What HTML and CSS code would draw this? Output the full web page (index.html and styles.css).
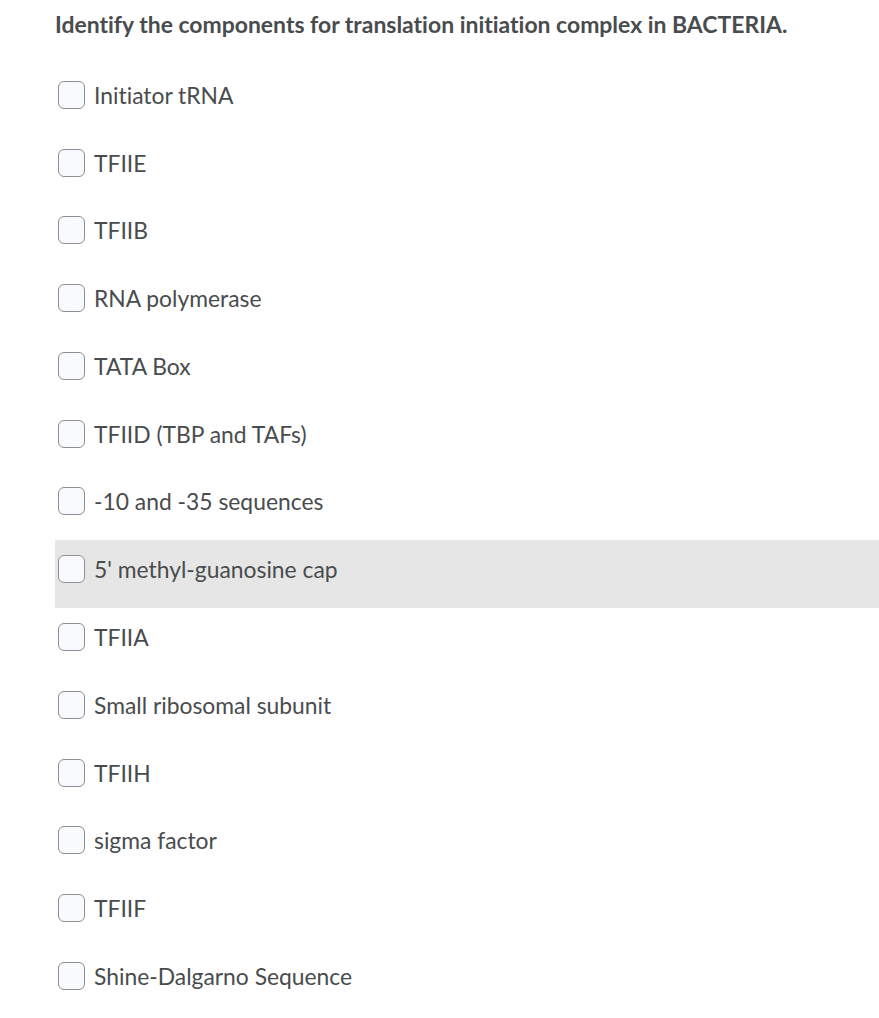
FILE: index.html
```html
<!DOCTYPE html>
<html>
<head>
<meta charset="utf-8">
<link rel="stylesheet" href="styles.css">
</head>
<body>
<div class="page">
  <h1 class="question">Identify the components for translation initiation complex in BACTERIA.</h1>
  <div class="options">
    <label class="option"><span class="box"></span><span class="label">Initiator tRNA</span></label>
    <label class="option"><span class="box"></span><span class="label">TFIIE</span></label>
    <label class="option"><span class="box"></span><span class="label">TFIIB</span></label>
    <label class="option"><span class="box"></span><span class="label">RNA polymerase</span></label>
    <label class="option"><span class="box"></span><span class="label">TATA Box</span></label>
    <label class="option"><span class="box"></span><span class="label">TFIID (TBP and TAFs)</span></label>
    <label class="option"><span class="box"></span><span class="label">-10 and -35 sequences</span></label>
    <label class="option hover"><span class="box"></span><span class="label">5' methyl-guanosine cap</span></label>
    <label class="option"><span class="box"></span><span class="label">TFIIA</span></label>
    <label class="option"><span class="box"></span><span class="label">Small ribosomal subunit</span></label>
    <label class="option"><span class="box"></span><span class="label">TFIIH</span></label>
    <label class="option"><span class="box"></span><span class="label">sigma factor</span></label>
    <label class="option"><span class="box"></span><span class="label">TFIIF</span></label>
    <label class="option"><span class="box"></span><span class="label">Shine-Dalgarno Sequence</span></label>
  </div>
</div>
</body>
</html>
```
FILE: styles.css
```css
html, body {
  margin: 0;
  padding: 0;
  background: #ffffff;
}
body {
  font-family: Lato, "Open Sans", sans-serif;
  color: #494c4e;
  font-variant-ligatures: none;
}
.page {
  padding-left: 55px;
}
.question {
  margin: 0;
  padding-top: 10px;
  font-size: 22.95px;
  font-weight: 700;
  line-height: 28px;
  height: 56px;
  box-sizing: border-box;
}
.options {
  display: flex;
  flex-direction: column;
  margin-top: 10px;
}
.option {
  display: flex;
  align-items: center;
  height: 67.77px;
  box-sizing: border-box;
  padding: 0 0 10px 3px;
  font-size: 22.85px;
}
.option.hover {
  background: #e6e6e6;
}
.box {
  width: 25px;
  height: 26px;
  border: 1px solid #8d8f92;
  border-radius: 6px;
  background: #f9fafe;
  flex: none;
}
.label {
  margin-left: 9px;
  line-height: 26px;
}
```
